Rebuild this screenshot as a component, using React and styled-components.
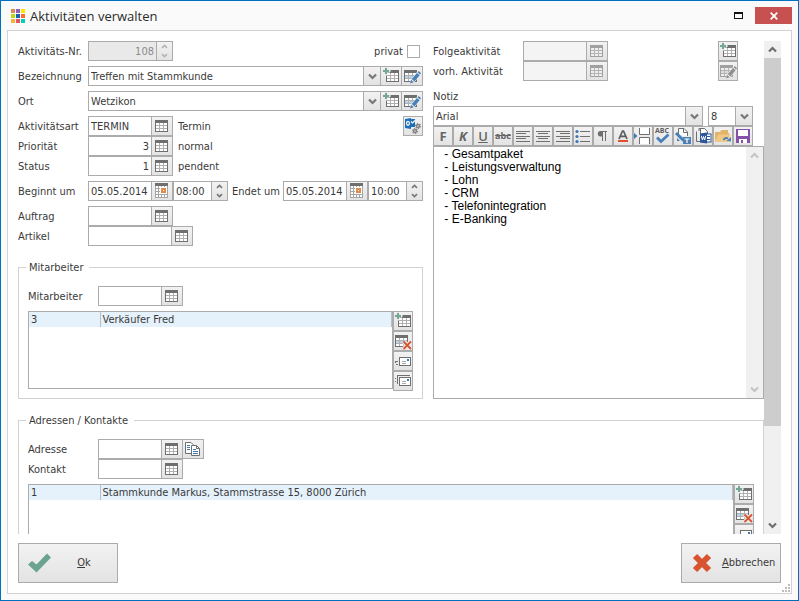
import React from "react";
import styled, { createGlobalStyle, css } from "styled-components";

const line = "#ababab";
const soft = "#d2d2d2";
const ink = "#3a3a3a";
const face = "linear-gradient(#f2f2f2, #e3e3e3)";
const uiFont = "'DejaVu Sans Condensed', 'DejaVu Sans', sans-serif";

const GlobalStyle = createGlobalStyle`
  *, *::before, *::after { box-sizing: border-box; }
  body { margin: 0; font: 11px/14px ${uiFont}; color: ${ink}; }
  button, input, select, textarea { font: inherit; color: inherit; margin: 0; padding: 0; border-radius: 0; }
`;

/* ---------- window ---------- */
const Window = styled.div`
  display: flex;
  flex-direction: column;
  height: 100vh;
  border: 1px solid #0070c0;
  background: #fafafa;
`;
const TitleBar = styled.header`
  display: flex;
  align-items: center;
  height: 29px;
  padding: 0 6px 0 10px;
`;
const Title = styled.h1`
  flex: 1;
  margin: 0 0 0 5px;
  font: 400 13px/28px "Open Sans", sans-serif;
  color: #2b2b2b;
`;
const WindowButton = styled.button`
  display: grid;
  place-items: center;
  width: ${(p) => (p.$close ? 37 : 33)}px;
  height: 17px;
  border: 0;
  background: ${(p) => (p.$close ? "#c75050" : "transparent")};
`;
const Panel = styled.main`
  position: relative;
  flex: 1;
  min-height: 0;
  display: flex;
  flex-direction: column;
  gap: 9px;
  margin: 0 6px 6px;
  padding: 10px;
  border: 1px solid ${soft};
  background: #fff;
`;
const Scroller = styled.div`
  flex: 1;
  min-height: 0;
  display: flex;
`;
const Content = styled.div`
  flex: 1;
  min-width: 0;
  overflow: hidden;
`;
const Columns = styled.div`
  display: grid;
  grid-template-columns: minmax(0, 405fr) minmax(0, 331fr);
  column-gap: 10px;
`;
const Column = styled.div`
  display: flex;
  flex-direction: column;
  min-width: 0;
`;
const Footer = styled.footer`
  display: flex;
  justify-content: space-between;
`;
const Grip = styled.svg`
  position: absolute;
  right: 0;
  bottom: 0;
  fill: #bdbdbd;
`;

/* ---------- scroll bars ---------- */
const Track = styled.div`
  flex: none;
  display: flex;
  flex-direction: column;
  width: 17px;
  background: #f0f0f0;
`;
const TrackButton = styled.button`
  display: grid;
  place-items: center;
  height: 17px;
  border: 0;
  background: none;
  color: ${(p) => (p.disabled ? "#c4c4c4" : "#6e6e6e")};
`;
const Thumb = styled.div`
  flex: ${(p) => p.$share};
  background: #cdcdcd;
`;
const Rest = styled.div`
  flex: ${(p) => p.$share};
`;

/* ---------- form ---------- */
const Row = styled.div`
  display: flex;
  align-items: center;
  height: 20px;
  margin-top: ${(p) => (p.$gap ? 5 : 0)}px;
`;
const Label = styled.label`
  flex: none;
  width: ${(p) => p.$width || 70}px;
  padding-top: 2px;
  padding-left: ${(p) => p.$indent || 0}px;
  white-space: nowrap;
`;
const Note = styled.output`
  margin-left: 5px;
  padding-top: 2px;
`;
const PrivateLabel = styled.label`
  display: flex;
  align-items: center;
  gap: 4px;
  margin-left: auto;
  padding-right: 3px;
`;
const PrivateText = styled.span`
  padding-top: 2px;
`;
const CheckBox = styled.input`
  appearance: none;
  width: 13px;
  height: 13px;
  border: 1px solid ${line};
  background: #fff;
`;
const Field = styled.div`
  flex: ${(p) => (p.$width ? "none" : "1")};
  width: ${(p) => (p.$width ? p.$width + "px" : "auto")};
  min-width: 0;
  height: 20px;
  display: flex;
  border: 1px solid ${line};
  margin-right: ${(p) => p.$after || 0}px;
  background: #fff;
`;
const Text = styled.input`
  flex: 1;
  min-width: 0;
  width: 100%;
  border: 0;
  padding: 2px 2px 0;
  background: none;
  text-align: ${(p) => (p.$right ? "right" : "left")};
  outline: none;
  &:disabled { background: #f4f4f4; color: #8c8c8c; }
  ${(p) => p.$number && css`&:disabled { background: #e9e9e9; }`}
`;
const Segment = styled.button`
  flex: none;
  display: grid;
  place-items: center;
  width: 21px;
  border: 0;
  border-left: 1px solid ${line};
  background: ${face};
`;
const SpinBox = styled.div`
  flex: none;
  display: flex;
  flex-direction: column;
  width: 16px;
  border-left: 1px solid ${line};
  background: ${face};
  color: ${(p) => (p.$off ? "#b5b5b5" : "#777")};
`;
const SpinButton = styled.button`
  flex: 1;
  display: grid;
  place-items: center;
  border: 0;
  background: none;
  color: inherit;
`;
const Combo = styled.div`
  flex: 1;
  min-width: 0;
  display: grid;
  grid-template-columns: 1fr 17px;
`;
const Select = styled.select`
  grid-area: 1 / 1 / 2 / 3;
  appearance: none;
  width: 100%;
  border: 0;
  padding: 2px 2px 0;
  background: none;
  outline: none;
`;
const ComboArrow = styled.span`
  grid-area: 1 / 2;
  display: grid;
  place-items: center;
  border-left: 1px solid ${line};
  background: ${face};
  color: #777;
  pointer-events: none;
`;
const Tool = styled.button`
  flex: none;
  display: grid;
  place-items: center;
  width: 20px;
  height: 20px;
  border: 1px solid ${line};
  background: ${face};
  color: #666;
  margin-left: ${(p) => (p.$push ? "auto" : 0)};
  font: ${(p) => (p.$italic ? "italic" : "normal")} ${(p) => (p.$line ? 600 : 700)} 13px/16px "Open Sans", sans-serif;
  text-decoration: ${(p) => p.$line || "none"};
  overflow: hidden;
`;
const Strike = styled.s`
  font: 700 9px/16px "Open Sans", sans-serif;
`;
const Previous = styled.div`
  display: flex;
  margin-bottom: 7px;
`;
const PreviousFields = styled.div`
  flex: 1;
`;
const ToolStack = styled.div`
  display: flex;
  flex-direction: column;
  padding-right: 26px;
`;
const NoteHeading = styled.label`
  padding: 2px 0;
`;
const Strip = styled.div`
  display: flex;
`;
const Editor = styled.div`
  flex: 1;
  display: flex;
  border: 1px solid ${line};
`;
const EditorText = styled.textarea`
  flex: 1;
  min-width: 0;
  resize: none;
  overflow: hidden;
  border: 0;
  outline: none;
  padding: 1px 7px;
  font: 12px/13px "Liberation Sans", Arial, sans-serif;
  color: #000;
`;

/* ---------- groups and lists ---------- */
const Group = styled.fieldset`
  min-width: 0;
  margin: 14px 0 0;
  padding: 11px 7px 7px;
  border: 1px solid ${soft};
`;
const Legend = styled.legend`
  padding: 0 6px 0 3px;
  line-height: 15px;
`;
const GroupBody = styled.div`
  padding: 0 2px;
`;
const ListRow = styled.div`
  display: flex;
  align-items: flex-start;
  margin-top: 5px;
`;
const ListBox = styled.div`
  flex: 1;
  min-width: 0;
  height: 78px;
  border: 1px solid ${line};
`;
const Table = styled.table`
  width: 100%;
  border-collapse: collapse;
  table-layout: fixed;
`;
const Cell = styled.td`
  width: ${(p) => (p.$first ? "71px" : "auto")};
  height: 15px;
  padding: 1px 2px 0;
  line-height: 14px;
  background: #e5f1fb;
  border-right: 1px solid #b8c0c6;
`;

const DialogButton = styled.button`
  display: grid;
  grid-template-columns: 40px 1fr;
  align-items: center;
  justify-items: center;
  width: 100px;
  height: 40px;
  border: 1px solid ${line};
  background: ${face};
  padding: ${(p) => (p.$wide ? "0 7px 0 0" : "0 8px 0 0")};
`;

/* ---------- icons ---------- */
const Svg = ({ children, size = 18, ...rest }) => (
  <svg width={size} height={size} viewBox={`0 0 ${size} ${size}`} aria-hidden="true" {...rest}>
    {children}
  </svg>
);
const Chevron = ({ up, small }) => (
  <svg width={small ? 7 : 9} height={small ? 5 : 7} viewBox="0 0 9 7" aria-hidden="true">
    <path d={up ? "M1 5.5 4.5 2 8 5.5" : "M1 1.5 4.5 5 8 1.5"} fill="none" stroke="currentColor" strokeWidth="2.2" />
  </svg>
);
const GridShape = ({ x, y = 3, off, marked }) => (
  <g shapeRendering="crispEdges">
    <rect x={x} y={y} width="13" height="12" fill={off ? "#a0a0a0" : "#6f6f6f"} />
    <rect x={x + 1} y={y + 3} width="11" height="8" fill={off ? "#b4b4b4" : "#b0b0b0"} />
    {[0, 1, 2].map((r) =>
      [0, 1, 2].map((c) => (
        <rect
          key={`${r}${c}`}
          x={x + 1 + c * 4}
          y={y + 3 + r * 3}
          width="3"
          height="2"
          fill={marked && r === 1 ? (off ? "#dcdcdc" : "#b9d3ea") : off ? "#eeeeee" : "#ffffff"}
        />
      ))
    )}
  </g>
);
const TableIcon = ({ off }) => (
  <Svg><GridShape x={2} off={off} /></Svg>
);
const AddIcon = () => (
  <Svg>
    <GridShape x={4} />
    <path d="M0 3H3V0H5V3H8V5H5V8H3V5H0Z" fill="#ebebeb" stroke="#ebebeb" />
    <path d="M1 4H7M4 1V7" stroke="#72a793" strokeWidth="2" shapeRendering="crispEdges" />
  </Svg>
);
const EditIcon = ({ off }) => (
  <Svg>
    <GridShape x={1} off={off} marked />
    <path d="M6.5 17 8 12 14 5 17.5 8 11 15.5Z" fill="#ebebeb" />
    <path d="M7 16.5 8 12.8 10.7 15.3Z M8.8 12 14 6 16.6 8.3 11.4 14.4Z M14.6 5.3 15.8 4 18 6.2 17 7.6Z" fill={off ? "#8f8f8f" : "#4a80b8"} />
  </Svg>
);
const DeleteIcon = () => (
  <Svg>
    <GridShape x={1} marked />
    <path d="M9.5 9.5 17 17M17 9.5 9.5 17" stroke="#ebebeb" strokeWidth="4" />
    <path d="M9.5 9.5 17 17M17 9.5 9.5 17" stroke="#d8532f" strokeWidth="1.8" />
  </Svg>
);
const CalendarIcon = () => (
  <Svg shapeRendering="crispEdges">
    <rect x="2" y="1" width="13" height="15" fill="#a5a5a5" />
    <rect x="2" y="1" width="13" height="3" fill="#6f6f6f" />
    {[0, 1, 2, 3].map((r) =>
      [0, 1, 2, 3].map((c) => <rect key={`${r}${c}`} x={3 + c * 3} y={4 + r * 3} width="2" height="2" fill="#fff" />)
    )}
    <rect x="7" y="5" width="7" height="7" fill="#fff" />
    <rect x="8" y="6" width="5" height="5" fill="#e08a4a" />
    <rect x="10" y="8" width="1" height="1" fill="#fff" />
  </Svg>
);
const MailShape = () => (
  <g shapeRendering="crispEdges">
    <rect x="5.5" y="5.5" width="11" height="8" fill="#fff" stroke="#6f6f6f" />
    <rect x="13" y="7" width="2" height="2" fill="#3d78b4" />
    <path d="M8 9.5H12M8 11.5H12" stroke="#a9a9a9" />
  </g>
);
const MailIcon = () => (
  <Svg>
    <MailShape />
    <path d="M1 9.5H4M2 12.5H4M1 10V11" stroke="#6f6f6f" shapeRendering="crispEdges" />
  </Svg>
);
const MailsIcon = () => (
  <Svg>
    <MailShape />
    <path d="M3.5 12V3.5H16M1 6.5H2M1 9.5H2" fill="none" stroke="#6f6f6f" shapeRendering="crispEdges" />
  </Svg>
);
const CopyIcon = () => (
  <Svg>
    <path d="M1.5 2.5H7L9 4.5V13.5H1.5Z" fill="#fff" stroke="#6f6f6f" />
    <path d="M3 5.5H6M3 7.5H6M3 9.5H6" stroke="#3d78b4" />
    <path d="M7.5 5.5H12.5L15.5 8.5V15.5H7.5Z" fill="#fff" stroke="#6f6f6f" />
    <path d="M12.5 5.5V8.5H15.5" fill="none" stroke="#6f6f6f" />
    <path d="M9 9.5H12M9 11.5H14M9 13.5H14" stroke="#3d78b4" />
  </Svg>
);
const Gear = ({ x, y, r }) => (
  <g transform={`translate(${x} ${y})`} fill="none" stroke="#858585">
    <circle r={r} strokeWidth="1.6" />
    <circle r={r + 1} strokeWidth="1.2" strokeDasharray="1.2 1.4" />
  </g>
);
const OutlookIcon = () => (
  <Svg>
    <path d="M1 2 7 1V12L1 11Z" fill="#1e6fb8" />
    <path d="M7 2H11V10H7Z" fill="#1e6fb8" />
    <ellipse cx="4" cy="6.3" rx="1.4" ry="2" fill="none" stroke="#fff" strokeWidth="1.2" />
    <path d="M7 4.5 8.5 6 11 3.5" fill="none" stroke="#fff" strokeWidth="1.1" />
    <Gear x={14} y={9} r={1.5} />
    <Gear x={11} y={14} r={1.5} />
  </Svg>
);
const Lines = ({ kind }) => (
  <Svg shapeRendering="crispEdges">
    {[4, 6, 9, 11, 14].map((y, i) => {
      const short = i % 2 === 1;
      const x = !short || kind === "left" ? 2 : kind === "center" ? 4 : 6;
      return <rect key={y} x={x} y={y} width={short ? 10 : 14} height="1" fill="#6f6f6f" />;
    })}
  </Svg>
);
const BulletIcon = () => (
  <Svg>
    <path d="M6 4.5H16M6 9.5H16M6 14.5H16" stroke="#6f6f6f" />
    <circle cx="3" cy="4.5" r="1.6" fill="#3d78b4" />
    <circle cx="3" cy="9.5" r="1.6" fill="#3d78b4" />
    <circle cx="3" cy="14.5" r="1.6" fill="#3d78b4" />
  </Svg>
);
const ParagraphIcon = () => (
  <Svg>
    <path d="M9 4H6.5a2.7 2.7 0 0 0 0 5.4H9Z" fill="#6f6f6f" />
    <path d="M8.5 4V14M11.5 4V14M7 4.5H13" stroke="#6f6f6f" />
  </Svg>
);
const ColorIcon = () => (
  <Svg>
    <path d="M5 12 8.5 4H9.5L13 12M6.5 9.3H11.5" fill="none" stroke="#5c5c5c" strokeWidth="1.7" />
    <rect x="4" y="13" width="10" height="2" fill="#e0502f" />
  </Svg>
);
const BreakIcon = () => (
  <Svg>
    <path d="M5.5 1V7.5H15.5V1M5.5 17V10.5H15.5V17" fill="#fff" stroke="#6f6f6f" />
    <path d="M0 6V12L3.5 9Z" fill="#3d78b4" />
  </Svg>
);
const SpellIcon = () => (
  <Svg>
    <text x="8" y="6" textAnchor="middle" fontFamily="Open Sans, sans-serif" fontSize="7" fontWeight="700" fill="#5c5c5c">ABC</text>
    <path d="M3 10.5 7 14.5 14.5 7.5" fill="none" stroke="#4a80b8" strokeWidth="2.8" />
  </Svg>
);
const ReplaceIcon = () => (
  <Svg>
    <path d="M4.5 8V1.5H10L13.5 5V9" fill="#fff" stroke="#6f6f6f" />
    <path d="M9.5 1.5V5.5H13.5" fill="none" stroke="#6f6f6f" />
    <path d="M2 6 9.5 13.5" stroke="#4a80b8" strokeWidth="3" />
    <path d="M3 11 6 14H3Z" fill="#4a80b8" />
    <rect x="9" y="10" width="8" height="7" fill="#4a80b8" />
    <path d="M10.5 12H15.5M13 12V16" stroke="#fff" strokeWidth="1.2" />
  </Svg>
);
const WordIcon = () => (
  <Svg>
    <path d="M6 14.5H2.5V4.5M5 4V1.5H10.5L13.5 4.5V6" fill="none" stroke="#6f6f6f" />
    <path d="M6.5 1.5H10.5L13.5 4.5V15H6.5Z" fill="#fff" stroke="#6f6f6f" />
    <rect x="11" y="7" width="6" height="8" fill="#fff" stroke="#2b569a" />
    <path d="M12 9.5H16M12 12.5H16" stroke="#2b569a" />
    <path d="M6 6.5 13 5.5V16.5L6 15.5Z" fill="#2b569a" />
    <path d="M7.3 8.8 8.4 13 9.5 9.5 10.6 13 11.7 8.8" fill="none" stroke="#fff" strokeWidth="1" />
  </Svg>
);
const OpenIcon = () => (
  <Svg>
    <path d="M1 15V5H6L7.5 3H14V6H15V8H5Z" fill="#e2b568" />
    <path d="M1 15 4.5 7.5H16.5L14 15Z" fill="#f0c987" />
    <path d="M9.5 13Q11 10 14 11.5" fill="none" stroke="#4a80b8" strokeWidth="1.8" />
    <path d="M12.5 14 17 10V14.5Z" fill="#4a80b8" />
  </Svg>
);
const SaveIcon = () => (
  <Svg shapeRendering="crispEdges">
    <rect x="2" y="2" width="14" height="14" fill="#8550a8" />
    <rect x="4" y="3" width="10" height="6" fill="#fff" />
    <rect x="5" y="12" width="8" height="4" fill="#fff" />
    <rect x="7" y="13" width="2" height="3" fill="#8550a8" />
  </Svg>
);
const LogoIcon = () => (
  <Svg size={14} shapeRendering="crispEdges">
    {["#d98b57", "#8e5fbf", "#ffe600", "#b7dc0b", "#1b5fb4", "#ff6a2f", "#ffb13c", "#e6526a", "#00d2b0"].map((c, i) => (
      <rect key={c} x={(i % 3) * 5} y={Math.floor(i / 3) * 5} width="4" height="4" fill={c} />
    ))}
  </Svg>
);

/* ---------- composed controls ---------- */
function Lookup({ id, label, value, right, width = 85, off, after, icon, extra }) {
  return (
    <Field $width={width} $after={after}>
      <Text id={id} defaultValue={value} $right={right} disabled={off} />
      <Segment type="button" aria-label={`${label} auswählen`} disabled={off}>{icon || <TableIcon off={off} />}</Segment>
      {extra}
    </Field>
  );
}
function Spin({ id, value, width, off, right, label }) {
  return (
    <Field $width={width}>
      <Text id={id} defaultValue={value} disabled={off} $number $right={right} aria-label={label} />
      <SpinBox $off={off}>
        <SpinButton type="button" aria-label="Erhöhen" disabled={off}><Chevron up small /></SpinButton>
        <SpinButton type="button" aria-label="Verringern" disabled={off}><Chevron small /></SpinButton>
      </SpinBox>
    </Field>
  );
}
function ComboBox({ id, value, label }) {
  return (
    <Combo>
      <ComboArrow><Chevron /></ComboArrow>
      <Select id={id} aria-label={label} defaultValue={value}><option>{value}</option></Select>
    </Combo>
  );
}
function ComboRow({ id, label, value }) {
  return (
    <Row $gap>
      <Label htmlFor={id}>{label}</Label>
      <Field>
        <ComboBox id={id} value={value} />
        <Segment type="button" aria-label={`${label} hinzufügen`}><AddIcon /></Segment>
        <Segment type="button" aria-label={`${label} bearbeiten`}><EditIcon /></Segment>
      </Field>
    </Row>
  );
}
function ScrollBar({ children, off }) {
  return (
    <Track>
      <TrackButton type="button" aria-label="Nach oben" disabled={off}><Chevron up /></TrackButton>
      {children}
      <TrackButton type="button" aria-label="Nach unten" disabled={off}><Chevron /></TrackButton>
    </Track>
  );
}
function List({ number, text }) {
  return (
    <ListRow>
      <ListBox>
        <Table><tbody><tr><Cell $first>{number}</Cell><Cell>{text}</Cell></tr></tbody></Table>
      </ListBox>
      <div>
        <Tool type="button" aria-label="Hinzufügen"><AddIcon /></Tool>
        <Tool type="button" aria-label="Löschen"><DeleteIcon /></Tool>
        <Tool type="button" aria-label="E-Mail"><MailIcon /></Tool>
        <Tool type="button" aria-label="E-Mail an alle"><MailsIcon /></Tool>
      </div>
    </ListRow>
  );
}

const note = [
  " - Gesamtpaket",
  " - Leistungsverwaltung",
  " - Lohn",
  " - CRM",
  " - Telefonintegration",
  " - E-Banking",
].join("\n");

export default function App() {
  return (
    <Window>
      <GlobalStyle />
      <TitleBar>
        <LogoIcon />
        <Title>Aktivitäten verwalten</Title>
        <WindowButton type="button" aria-label="Maximieren">
          <svg width="9" height="7" shapeRendering="crispEdges"><path d="M0 1H9" stroke="#111" strokeWidth="2" /><rect x=".5" y=".5" width="8" height="6" fill="none" stroke="#111" /></svg>
        </WindowButton>
        <WindowButton type="button" $close aria-label="Schliessen">
          <svg width="8" height="8"><path d="M.7.7 7.3 7.3M7.3.7.7 7.3" stroke="#fff" strokeWidth="1.8" /></svg>
        </WindowButton>
      </TitleBar>

      <Panel>
        <Scroller>
          <Content>
            <Columns>
              <Column>
                <Row>
                  <Label htmlFor="nr">Aktivitäts-Nr.</Label>
                  <Spin id="nr" value="108" width={85} off right />
                  <PrivateLabel><PrivateText>privat</PrivateText> <CheckBox type="checkbox" /></PrivateLabel>
                </Row>
                <ComboRow id="bez" label="Bezeichnung" value="Treffen mit Stammkunde" />
                <ComboRow id="ort" label="Ort" value="Wetzikon" />
                <Row $gap>
                  <Label htmlFor="art">Aktivitätsart</Label>
                  <Lookup id="art" label="Aktivitätsart" value="TERMIN" />
                  <Note htmlFor="art">Termin</Note>
                  <Tool type="button" $push aria-label="Outlook"><OutlookIcon /></Tool>
                </Row>
                <Row>
                  <Label htmlFor="prio">Priorität</Label>
                  <Lookup id="prio" label="Priorität" value="3" right />
                  <Note htmlFor="prio">normal</Note>
                </Row>
                <Row>
                  <Label htmlFor="status">Status</Label>
                  <Lookup id="status" label="Status" value="1" right />
                  <Note htmlFor="status">pendent</Note>
                </Row>
                <Row $gap>
                  <Label htmlFor="von">Beginnt um</Label>
                  <Lookup id="von" label="Beginn" value="05.05.2014" icon={<CalendarIcon />} />
                  <Spin value="08:00" width={55} label="Beginn Uhrzeit" />
                  <Label htmlFor="bis" $width={55} $indent={4}>Endet um</Label>
                  <Lookup id="bis" label="Ende" value="05.05.2014" icon={<CalendarIcon />} />
                  <Spin value="10:00" width={55} label="Ende Uhrzeit" />
                </Row>
                <Row $gap>
                  <Label htmlFor="auftrag">Auftrag</Label>
                  <Lookup id="auftrag" label="Auftrag" />
                </Row>
                <Row>
                  <Label htmlFor="artikel">Artikel</Label>
                  <Lookup id="artikel" label="Artikel" width={105} />
                </Row>

                <Group>
                  <Legend>Mitarbeiter</Legend>
                  <GroupBody>
                    <Row>
                      <Label htmlFor="mit">Mitarbeiter</Label>
                      <Lookup id="mit" label="Mitarbeiter" />
                    </Row>
                    <List number="3" text="Verkäufer Fred" />
                  </GroupBody>
                </Group>
              </Column>

              <Column>
                <Previous>
                  <PreviousFields>
                    <Row>
                      <Label htmlFor="folge" $width={90}>Folgeaktivität</Label>
                      <Lookup id="folge" label="Folgeaktivität" off />
                    </Row>
                    <Row>
                      <Label htmlFor="vorh" $width={90}>vorh. Aktivität</Label>
                      <Lookup id="vorh" label="vorh. Aktivität" off />
                    </Row>
                  </PreviousFields>
                  <ToolStack>
                    <Tool type="button" aria-label="Folgeaktivität hinzufügen"><AddIcon /></Tool>
                    <Tool type="button" disabled aria-label="Aktivität bearbeiten"><EditIcon off /></Tool>
                  </ToolStack>
                </Previous>
                <NoteHeading htmlFor="notiz">Notiz</NoteHeading>
                <Row>
                  <Field $after={5}><ComboBox label="Schriftart" value="Arial" /></Field>
                  <Field $width={45} $after={11}><ComboBox label="Schriftgrösse" value="8" /></Field>
                </Row>
                <Strip role="toolbar" aria-label="Formatierung">
                  <Tool type="button" aria-label="Fett">F</Tool>
                  <Tool type="button" $italic aria-label="Kursiv">K</Tool>
                  <Tool type="button" $line="underline" aria-label="Unterstrichen">U</Tool>
                  <Tool type="button" aria-label="Durchgestrichen"><Strike>abc</Strike></Tool>
                  <Tool type="button" aria-label="Linksbündig"><Lines kind="left" /></Tool>
                  <Tool type="button" aria-label="Zentriert"><Lines kind="center" /></Tool>
                  <Tool type="button" aria-label="Rechtsbündig"><Lines kind="right" /></Tool>
                  <Tool type="button" aria-label="Aufzählung"><BulletIcon /></Tool>
                  <Tool type="button" aria-label="Absatz"><ParagraphIcon /></Tool>
                  <Tool type="button" aria-label="Schriftfarbe"><ColorIcon /></Tool>
                  <Tool type="button" aria-label="Seitenumbruch"><BreakIcon /></Tool>
                  <Tool type="button" aria-label="Rechtschreibung"><SpellIcon /></Tool>
                  <Tool type="button" aria-label="Textbaustein"><ReplaceIcon /></Tool>
                  <Tool type="button" aria-label="Word"><WordIcon /></Tool>
                  <Tool type="button" aria-label="Öffnen"><OpenIcon /></Tool>
                  <Tool type="button" aria-label="Speichern"><SaveIcon /></Tool>
                </Strip>
                <Editor>
                  <EditorText id="notiz" defaultValue={note} spellCheck={false} />
                  <ScrollBar off><Rest $share={1} /></ScrollBar>
                </Editor>
              </Column>
            </Columns>

            <Group>
              <Legend>Adressen / Kontakte</Legend>
              <GroupBody>
                <Row>
                  <Label htmlFor="adr">Adresse</Label>
                  <Lookup
                    id="adr"
                    label="Adresse"
                    width={106}
                    extra={<Segment type="button" aria-label="Adresse kopieren"><CopyIcon /></Segment>}
                  />
                </Row>
                <Row>
                  <Label htmlFor="kon">Kontakt</Label>
                  <Lookup id="kon" label="Kontakt" />
                </Row>
                <List number="1" text="Stammkunde Markus, Stammstrasse 15, 8000 Zürich" />
              </GroupBody>
            </Group>
          </Content>
          <ScrollBar>
            <Thumb $share={368} />
            <Rest $share={91} />
          </ScrollBar>
        </Scroller>

        <Footer>
          <DialogButton type="button">
            <svg width="23" height="20" viewBox="0 0 23 20" aria-hidden="true"><path d="M0 11.5 4 8 8.5 11.5 19 0.5 23 4.5 8.5 19.5Z" fill="#6aa38f" /></svg>
            <span><u>O</u>k</span>
          </DialogButton>
          <DialogButton type="button" $wide>
            <svg width="20" height="20" viewBox="0 0 20 20" aria-hidden="true"><path d="M3 3 17 17M17 3 3 17" stroke="#d8532f" strokeWidth="6" /></svg>
            <span><u>A</u>bbrechen</span>
          </DialogButton>
        </Footer>
        <Grip width="9" height="9" aria-hidden="true">
          <path d="M6 0h2v2h-2zM3 3h2v2h-2zM6 3h2v2h-2zM0 6h2v2h-2zM3 6h2v2h-2zM6 6h2v2h-2z" />
        </Grip>
      </Panel>
    </Window>
  );
}
